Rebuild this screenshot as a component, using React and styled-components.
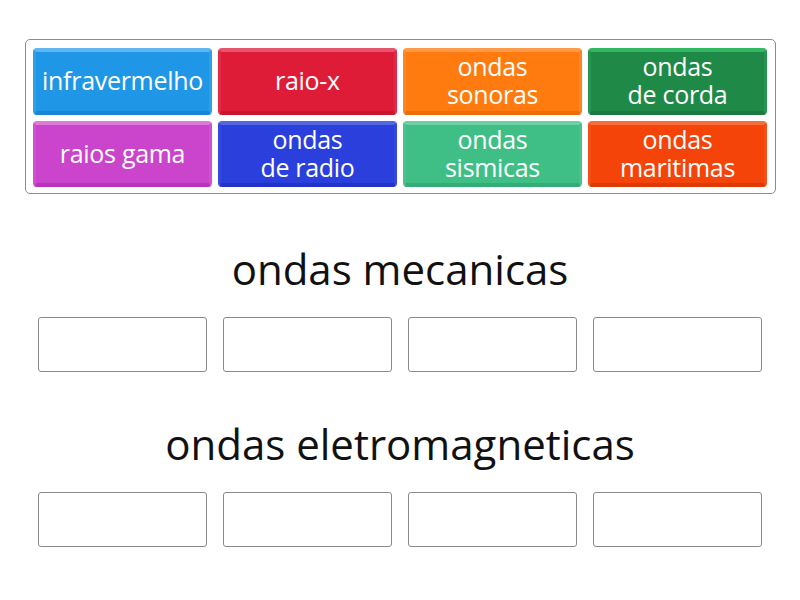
import React from "react";
import styled, { createGlobalStyle } from "styled-components";

const Global = createGlobalStyle`
  html, body { margin: 0; padding: 0; background: #fff; }
  body { font-family: "Open Sans", "Liberation Sans", sans-serif; }
`;

const Page = styled.div`
  width: 800px;
  height: 600px;
  box-sizing: border-box;
  padding: 39px 25px 0 25px;
  display: flex;
  flex-direction: column;
`;

const Bank = styled.div`
  box-sizing: border-box;
  width: 751px;
  height: 155px;
  border: 1px solid #8c8c8c;
  border-radius: 5px;
  padding: 8px 7px 6px 7px;
  display: grid;
  grid-template-columns: repeat(4, 179px);
  grid-template-rows: 67px 66px;
  column-gap: 6px;
  row-gap: 6px;
`;

const Tile = styled.div`
  box-sizing: border-box;
  border-radius: 4px;
  background: ${(p) => p.$c};
  border-style: solid;
  border-width: 4px 3px 4px 3px;
  border-color: ${(p) => p.$light} ${(p) => p.$mid} ${(p) => p.$dark} ${(p) => p.$mid};
  padding-bottom: 3px;
  display: flex;
  align-items: center;
  justify-content: center;
  text-align: center;
  color: #fff;
  font-family: "Open Sans", "Liberation Sans", sans-serif;
  font-size: 25px;
  line-height: 28px;
  font-weight: 500;
  letter-spacing: -0.3px;
  white-space: nowrap;
`;

const Line = styled.span`
  display: block;
  height: 28px;
`;

const Section = styled.div`
  display: flex;
  flex-direction: column;
  align-items: center;
  margin-top: ${(p) => p.$top}px;
`;

const Title = styled.div`
  font-family: "Open Sans", "Liberation Sans", sans-serif;
  font-size: 42px;
  line-height: 44px;
  color: #111;
  text-align: center;
`;

const Slots = styled.div`
  margin-top: 26px;
  display: grid;
  grid-template-columns: repeat(4, 169px);
  column-gap: 16px;
`;

const Slot = styled.div`
  box-sizing: border-box;
  height: 55px;
  border: 1.5px solid #8a8a8a;
  border-radius: 3px;
  background: #fff;
`;

const tiles = [
  { t: ["infravermelho"], c: "#1f97e6", light: "#5fb6f0", mid: "#2ea0ea", dark: "#1786d6" },
  { t: ["raio-x"], c: "#df1c38", light: "#e6546a", mid: "#e22a45", dark: "#c8162f" },
  { t: ["ondas", "sonoras"], c: "#ff7b0f", light: "#ff9a48", mid: "#ff8520", dark: "#ec6c06" },
  { t: ["ondas", "de corda"], c: "#1f8a48", light: "#33b862", mid: "#25954f", dark: "#1a7a3f" },
  { t: ["raios gama"], c: "#cb44cc", light: "#db7bdb", mid: "#d050d0", dark: "#b934ba" },
  { t: ["ondas", "de radio"], c: "#2a3fdb", light: "#5566e2", mid: "#3448dd", dark: "#2234c8" },
  { t: ["ondas", "sismicas"], c: "#3fbf85", light: "#6dd0a3", mid: "#48c38c", dark: "#33ad76" },
  { t: ["ondas", "maritimas"], c: "#f4440a", light: "#f76e3e", mid: "#f54f18", dark: "#de3a05" },
];

export default function App() {
  return (
    <>
      <Global />
      <Page>
        <Bank>
          {tiles.map((x, i) => (
            <Tile key={i} $c={x.c} $light={x.light} $mid={x.mid} $dark={x.dark}>
              <div>
                {x.t.map((l, j) => (
                  <Line key={j}>{l}</Line>
                ))}
              </div>
            </Tile>
          ))}
        </Bank>
        <Section $top={53}>
          <Title>ondas mecanicas</Title>
          <Slots>
            <Slot />
            <Slot />
            <Slot />
            <Slot />
          </Slots>
        </Section>
        <Section $top={50}>
          <Title>ondas eletromagneticas</Title>
          <Slots>
            <Slot />
            <Slot />
            <Slot />
            <Slot />
          </Slots>
        </Section>
      </Page>
    </>
  );
}
